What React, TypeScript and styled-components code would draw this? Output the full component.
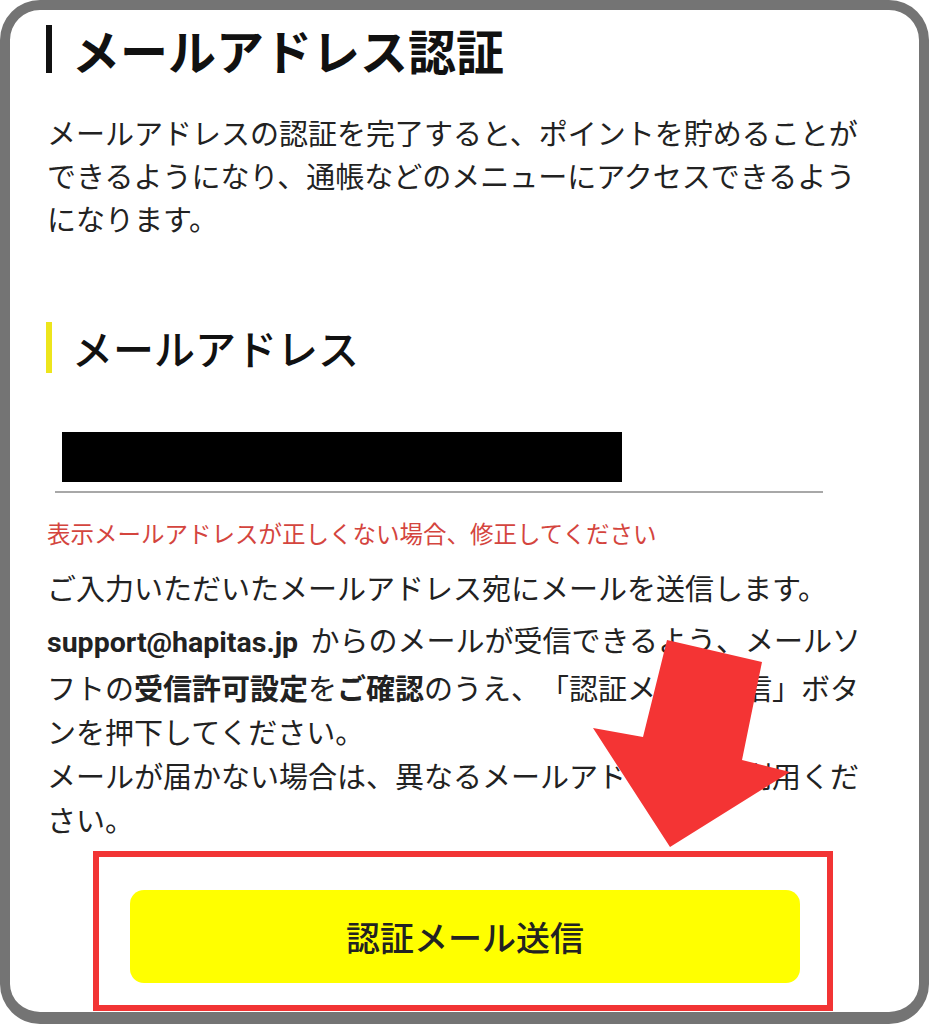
import React from 'react';
import styled, { createGlobalStyle } from 'styled-components';

const GlobalStyle = createGlobalStyle`
  html, body {
    margin: 0;
    padding: 0;
    background: #ffffff;
  }
  body {
    font-family: "Noto Sans CJK JP", "Noto Sans", sans-serif;
    color: #222222;
    text-spacing-trim: space-all;
  }
`;

const App: React.FC = () => {
  return (
    <Page>
      <GlobalStyle />
      <Frame>
        <Content>
          <Title>メールアドレス認証</Title>
          <Lead>
            メールアドレスの認証を完了すると、ポイントを貯めることができるようになり、通帳などのメニューにアクセスできるようになります。
          </Lead>

          <SubTitle>メールアドレス</SubTitle>
          <Field>
            <Redacted />
          </Field>
          <Notice>表示メールアドレスが正しくない場合、修正してください</Notice>

          <Body>ご入力いただいたメールアドレス宛にメールを送信します。</Body>
          <Body>
            <Latin>support@hapitas.jp</Latin> からのメールが受信できるよう、メールソフトの
            <b>受信許可設定</b>を<b>ご確認</b>のうえ、「認証メール送信」ボタンを押下してください。
            <br />
            メールが届かない場合は、異なるメールアドレスをご利用ください。
          </Body>

          <Highlight>
            <SendButton type="button">認証メール送信</SendButton>
          </Highlight>
        </Content>
      </Frame>

      <Arrow viewBox="0 0 929 1024" aria-hidden="true">
        <polygon
          points="667,640 762,662 742,760 790,772 670,847 593,728 643,737"
          fill="#f43434"
        />
      </Arrow>
    </Page>
  );
};

export default App;

// Styled Components
const Page = styled.div`
  position: relative;
  width: 929px;
  height: 1024px;
  overflow: hidden;
`;

const Frame = styled.div`
  box-sizing: border-box;
  width: 929px;
  height: 1024px;
  border: 10px solid #747474;
  border-bottom-width: 12px;
  border-radius: 40px;
  background: #ffffff;
  overflow: hidden;
`;

const Content = styled.div`
  display: flex;
  flex-direction: column;
  align-items: flex-start;
  padding: 15px 0 0 36px;
  width: 831px;
`;

const Title = styled.h1`
  margin: 0;
  padding-left: 20px;
  border-left: 6px solid #111111;
  font-size: 48px;
  font-weight: 700;
  line-height: 48px;
  color: #111111;
`;

const Lead = styled.p`
  margin: 38px 0 0 1px;
  font-size: 29px;
  line-height: 43px;
  width: 830px;
`;

const SubTitle = styled.h2`
  margin: 82px 0 0 0;
  padding-left: 20px;
  border-left: 6px solid #ede51c;
  font-size: 41px;
  font-weight: 500;
  line-height: 51px;
  color: #111111;
`;

const Field = styled.div`
  margin: 59px 0 0 9px;
  padding: 0 0 9px 7px;
  width: 761px;
  border-bottom: 2px solid #a8a8a8;
`;

const Redacted = styled.div`
  width: 560px;
  height: 50px;
  background: #000000;
`;

const Notice = styled.p`
  margin: 24px 0 0 1px;
  font-size: 23.5px;
  line-height: 32px;
  color: #d4453e;
`;

const Body = styled.p`
  margin: 16px 0 0 1px;
  font-size: 29px;
  line-height: 44px;
  width: 830px;

  & + & {
    margin-top: 8px;
  }

  b {
    font-weight: 700;
  }
`;

const Latin = styled.b`
  font-family: Roboto, "Noto Sans CJK JP", sans-serif;
  font-weight: 700;
  font-size: 28.5px;
  margin-right: 6px;
`;

const Highlight = styled.div`
  box-sizing: border-box;
  margin: 10px 0 0 47px;
  width: 740px;
  padding: 33px 27px 22px 31px;
  border: 6px solid #f23434;
`;

const SendButton = styled.button`
  display: flex;
  align-items: center;
  justify-content: center;
  width: 100%;
  height: 93px;
  border: none;
  border-radius: 14px;
  background: #ffff00;
  font-family: "Noto Sans CJK JP", sans-serif;
  font-size: 34px;
  font-weight: 500;
  color: #222222;
  cursor: pointer;
`;

const Arrow = styled.svg`
  position: absolute;
  top: 0;
  left: 0;
  width: 929px;
  height: 1024px;
  pointer-events: none;
`;
